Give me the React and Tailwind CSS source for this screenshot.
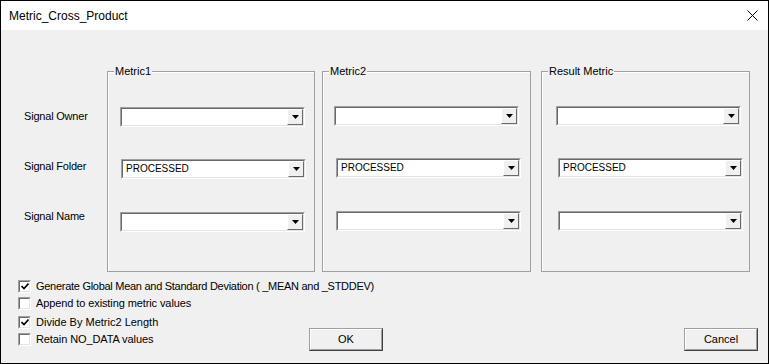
import React from 'react';

// Classic Win32 / VBA UserForm look-alike
const Combo = ({ value, offset = 0, className = '' }) => (
  <div
    className={`w-[185px] h-[20px] border-t border-l border-t-[#a0a0a0] border-l-[#a0a0a0] border-b border-r border-b-white border-r-white ${className}`}
    style={{ marginLeft: offset }}
  >
    <div className="h-full flex items-stretch bg-white border-t border-l border-t-[#696969] border-l-[#696969] border-b border-r border-b-[#e3e3e3] border-r-[#e3e3e3]">
      <div className="flex-1 flex items-center pl-[3px] text-[10px] text-black leading-none">{value}</div>
      <div className="w-[16px] flex items-center justify-center bg-[#f0f0f0] border-t border-l border-t-white border-l-white border-b border-r border-b-[#696969] border-r-[#696969]">
        <svg width="7" height="4" viewBox="0 0 7 4">
          <polygon points="0,0 7,0 3.5,4" fill="#000" />
        </svg>
      </div>
    </div>
  </div>
);

const Group = ({ title, width, pl, pt, offsets, className = '' }) => (
  <div
    className={`relative h-[201px] border border-[#a0a0a0] shadow-[inset_1px_1px_0_#ffffff] ${className}`}
    style={{ width }}
  >
    <span className="absolute -top-[7px] left-[6px] px-px bg-[#f0f0f0] text-[11px] leading-[13px] text-black">
      {title}
    </span>
    <div className="flex flex-col" style={{ paddingLeft: pl, paddingTop: pt }}>
      <Combo value="" offset={offsets[0]} />
      <Combo value="PROCESSED" offset={offsets[1]} className="mt-[32px]" />
      <Combo value="" offset={offsets[2]} className="mt-[33px]" />
    </div>
  </div>
);

const Check = ({ checked, label, className = '', textClass = '' }) => (
  <div className={`flex items-center h-[13px] ${className}`}>
    <div className="w-[13px] h-[13px] border-t border-l border-t-[#a0a0a0] border-l-[#a0a0a0] border-b border-r border-b-white border-r-white">
      <div className="w-full h-full bg-white border-t border-l border-t-[#696969] border-l-[#696969] border-b border-r border-b-[#e3e3e3] border-r-[#e3e3e3] flex items-center justify-center">
        {checked && (
          <svg width="8" height="7" viewBox="0 0 8 7">
            <polyline points="0.5,3 3,5.5 7.5,0.5" fill="none" stroke="#000" strokeWidth="1.6" />
          </svg>
        )}
      </div>
    </div>
    <span className={`ml-[5px] text-[11px] leading-[13px] text-black whitespace-nowrap ${textClass}`}>{label}</span>
  </div>
);

const Button = ({ children, className = '' }) => (
  <div className={`w-[74px] h-[23px] border-t border-l border-t-[#a0a0a0] border-l-[#a0a0a0] border-b border-r border-b-[#404040] border-r-[#404040] ${className}`}>
    <div className="h-full flex items-center justify-center bg-[#f0f0f0] border-t border-l border-t-white border-l-white border-b border-r border-b-[#a0a0a0] border-r-[#a0a0a0] text-[11px] text-black">
      {children}
    </div>
  </div>
);

export default function App() {
  return (
    <div
      className="w-[769px] h-[364px] border border-black bg-[#f0f0f0] overflow-hidden flex flex-col"
      style={{ fontFamily: '"Liberation Sans", Arial, sans-serif' }}
    >
      {/* title bar */}
      <div className="h-[29px] shrink-0 bg-white flex items-center justify-between pl-[8px] pr-[10px]">
        <span className="text-[12px] text-black">Metric_Cross_Product</span>
        <svg width="11" height="11" viewBox="0 0 11 11">
          <path d="M0.5 0.5 L10.5 10.5 M10.5 0.5 L0.5 10.5" stroke="#000" strokeWidth="1" />
        </svg>
      </div>

      {/* groups */}
      <div className="flex mt-[41px]">
        <div className="w-[106px] shrink-0 pl-[23px] pt-[39px] flex flex-col text-[11px] leading-[13px] text-black tracking-[-0.2px]">
          <span>Signal Owner</span>
          <span className="mt-[37px]">Signal Folder</span>
          <span className="mt-[37px]">Signal Name</span>
        </div>
        <Group title="Metric1" width={208} pl={12} pt={35} offsets={[0, 1, 0]} />
        <Group title="Metric2" width={209} pl={11} pt={34} offsets={[0, 2, 2]} className="ml-[7px]" />
        <Group title="Result Metric" width={209} pl={14} pt={34} offsets={[0, 2, 2]} className="ml-[10px]" />
      </div>

      {/* options + buttons */}
      <div className="flex flex-col pl-[17px] pt-[8px]">
        <Check checked label="Generate Global Mean and Standard Deviation ( _MEAN and _STDDEV)" textClass="tracking-[-0.28px]" />
        <Check label="Append to existing metric values" className="mt-[4px]" textClass="tracking-[-0.1px]" />
        <Check checked label="Divide By Metric2 Length" className="mt-[6px]" />
        <div className="flex items-center h-[23px] -mt-px">
          <Check label="Retain NO_DATA values" className="w-[291px]" textClass="tracking-[-0.1px]" />
          <Button>OK</Button>
          <Button className="ml-[301px]">Cancel</Button>
        </div>
      </div>
    </div>
  );
}
